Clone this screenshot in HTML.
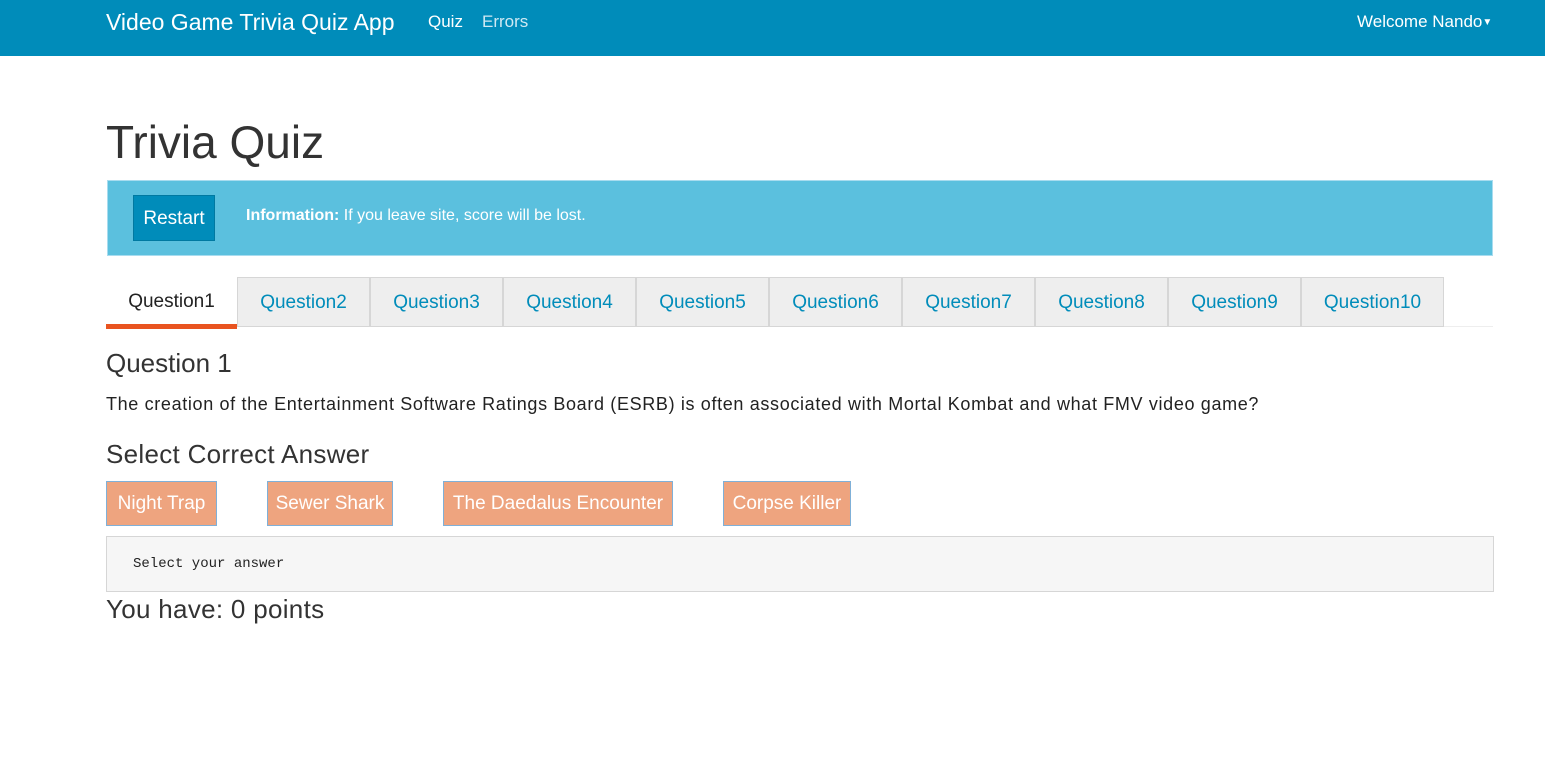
<!DOCTYPE html>
<html><head><meta charset="utf-8"><style>
*{box-sizing:border-box;margin:0;padding:0}
body{width:1545px;height:768px;background:#fff;font-family:"Liberation Sans",sans-serif;color:#222;position:relative;overflow:hidden}
.a{position:absolute;white-space:nowrap}
.nav{position:absolute;left:0;top:0;width:1545px;height:56px;background:#008cba}
.tab{position:absolute;top:277px;height:50px;background:#eee;border:1px solid #d6d6d6;color:#008cba;font-size:19px;text-align:center;line-height:50px}
.btn{position:absolute;top:481px;height:45px;background:#eea47f;border:1px solid #7fb0d8;color:#fff;font-size:19px;text-align:center;line-height:43px}
.h{font-size:26px;color:#333}
</style></head><body>
<div class="nav">
<div class="a" style="left:106px;top:9px;font-size:23px;color:#fff">Video Game Trivia Quiz App</div>
<div class="a" style="left:428px;top:12px;font-size:17px;color:#fff">Quiz</div>
<div class="a" style="left:482px;top:12px;font-size:17px;color:#cfe9f3">Errors</div>
<div class="a" style="left:1357px;top:12px;font-size:17px;color:#fff">Welcome Nando<span style="font-size:10px;vertical-align:2px">&#9660;</span></div>
</div>
<div class="a" style="left:106px;top:115px;font-size:46px;color:#333">Trivia Quiz</div>
<div class="a" style="left:107px;top:180px;width:1386px;height:76px;background:#5bc0de;border:1px solid #a8dcef"></div>
<div class="a" style="left:133px;top:195px;width:82px;height:46px;background:#008cba;border:1px solid #0079a1;color:#fff;font-size:19px;text-align:center;line-height:46px">Restart</div>
<div class="a" style="left:246px;top:207px;font-size:16px;color:#fff"><b>Information:</b> If you leave site, score will be lost.</div>
<div class="a" style="left:106px;top:326px;width:1387px;height:1px;background:#eee"></div>
<div class="a" style="left:106px;top:277px;width:131px;height:52px;font-size:19px;text-align:center;line-height:50px;color:#222;border-bottom:5px solid #e95420">Question1</div>
<div class="tab" style="left:237px;width:133px">Question2</div>
<div class="tab" style="left:370px;width:133px">Question3</div>
<div class="tab" style="left:503px;width:133px">Question4</div>
<div class="tab" style="left:636px;width:133px">Question5</div>
<div class="tab" style="left:769px;width:133px">Question6</div>
<div class="tab" style="left:902px;width:133px">Question7</div>
<div class="tab" style="left:1035px;width:133px">Question8</div>
<div class="tab" style="left:1168px;width:133px">Question9</div>
<div class="tab" style="left:1301px;width:143px">Question10</div>
<div class="a h" style="left:106px;top:348px">Question 1</div>
<div class="a" style="left:106px;top:394px;font-size:18px;letter-spacing:0.65px">The creation of the Entertainment Software Ratings Board (ESRB) is often associated with Mortal Kombat and what FMV video game?</div>
<div class="a h" style="left:106px;top:439px;letter-spacing:0.3px">Select Correct Answer</div>
<div class="btn" style="left:106px;width:111px">Night Trap</div>
<div class="btn" style="left:267px;width:126px">Sewer Shark</div>
<div class="btn" style="left:443px;width:230px">The Daedalus Encounter</div>
<div class="btn" style="left:723px;width:128px">Corpse Killer</div>
<div class="a" style="left:106px;top:536px;width:1388px;height:56px;background:#f6f6f6;border:1px solid #d6d6d6;font-family:'Liberation Mono',monospace;font-size:14px;padding:19px 0 0 26px">Select your answer</div>
<div class="a h" style="left:106px;top:594px;letter-spacing:0.3px">You have: 0 points</div>
</body></html>
